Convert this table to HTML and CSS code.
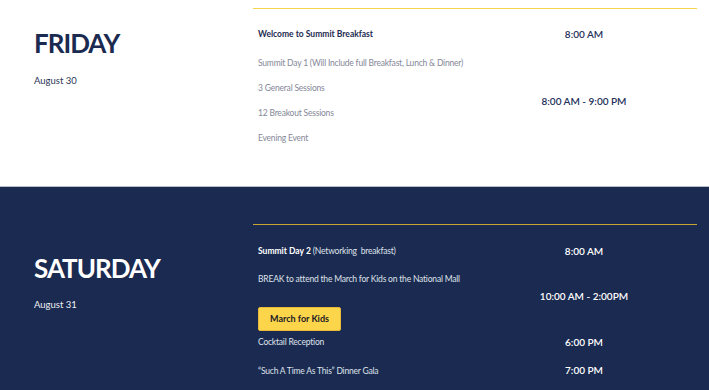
FILE: index.html
```html
<!DOCTYPE html>
<html lang="en">
<head>
<meta charset="utf-8">
<title>Summit Schedule</title>
<link rel="stylesheet" href="styles.css">
</head>
<body>
<section class="day day--light">
  <div class="day-info day-info--friday">
    <h2 class="day-name">FRIDAY</h2>
    <p class="day-date">August 30</p>
  </div>
  <div class="schedule">
    <div class="row row--first">
      <div class="events"><p class="event event--strong">Welcome to Summit Breakfast</p></div>
      <div class="time">8:00 AM</div>
    </div>
    <div class="row row--list">
      <div class="events events--list">
        <p class="event">Summit Day 1 (Will Include full Breakfast, Lunch &amp; Dinner)</p>
        <p class="event">3 General Sessions</p>
        <p class="event">12 Breakout Sessions</p>
        <p class="event">Evening Event</p>
      </div>
      <div class="time">8:00 AM - 9:00 PM</div>
    </div>
  </div>
</section>
<section class="day day--dark">
  <div class="day-info day-info--saturday">
    <h2 class="day-name">SATURDAY</h2>
    <p class="day-date">August 31</p>
  </div>
  <div class="schedule">
    <div class="row row--first">
      <div class="events"><p class="event"><strong class="event-title">Summit Day 2</strong> (Networking&nbsp; breakfast)</p></div>
      <div class="time">8:00 AM</div>
    </div>
    <div class="row">
      <div class="events events--break">
        <p class="event">BREAK to attend the March for Kids on the National Mall</p>
        <a class="btn" href="#">March for Kids</a>
      </div>
      <div class="time time--raised">10:00 AM - 2:00PM</div>
    </div>
    <div class="row row--tight">
      <div class="events"><p class="event">Cocktail Reception</p></div>
      <div class="time">6:00 PM</div>
    </div>
    <div class="row">
      <div class="events"><p class="event">“Such A Time As This” Dinner Gala</p></div>
      <div class="time time--up">7:00 PM</div>
    </div>
  </div>
</section>
</body>
</html>
```

FILE: styles.css
```css
* { box-sizing: border-box; }

html, body {
  margin: 0;
  padding: 0;
  background: #ffffff;
  font-family: Lato, "Open Sans", Arial, sans-serif;
  overflow: hidden;
}

.day {
  display: grid;
  grid-template-columns: 253px 1fr;
  padding: 0 12px 0 0;
}

.day--light {
  background: #ffffff;
  height: 186px;
  padding-top: 8px;
  color: #1b2a50;
}

.day--dark {
  background: #1b2a50;
  border-top: 1px solid #b8bcc8;
  padding-top: 37px;
  height: 204px;
  color: #ffffff;
}

.day-info {
  padding-left: 34px;
}

.day-info--friday { padding-top: 19px; }
.day-info--saturday { padding-top: 28px; }

.day-name {
  margin: 0;
  font-size: 26px;
  line-height: 32px;
  font-weight: 700;
  letter-spacing: -1px;
}

.day--light .day-name { color: #1b2a50; }
.day--dark .day-name { color: #ffffff; }

.day-date {
  margin: 15px 0 0;
  font-size: 9.5px;
  line-height: 14px;
}

.day--dark .day-date { margin-top: 14px; }

.day--light .day-date { color: #2b3555; }
.day--dark .day-date { color: #eef0f5; }

.schedule {
  border-top: 1px solid #f8d64b;
  padding-top: 18px;
}

.day--dark .schedule { border-top-color: #caa431; padding-top: 19px; }

.row {
  display: grid;
  grid-template-columns: 1fr 1fr;
  align-items: center;
  margin-top: 14px;
}

.row--first { margin-top: 0; }
.row--list { margin-top: 15px; }
.row--tight { margin-top: 4px; }

.events {
  padding-left: 5px;
}

.events--list {
  display: flex;
  flex-direction: column;
  gap: 11px;
}

.events--break {
  display: flex;
  flex-direction: column;
  align-items: flex-start;
  gap: 21px;
}

.event {
  margin: 0;
  font-size: 8.5px;
  letter-spacing: -0.2px;
  line-height: 14px;
  white-space: nowrap;
}

.day--light .event { color: #858898; }
.day--light .event--strong { color: #1b2a50; font-weight: 700; letter-spacing: 0; }

.day--dark .event { color: #dfe2ea; }
.event-title { color: #ffffff; font-weight: 700; letter-spacing: 0; }

.time {
  text-align: center;
  padding-right: 4px;
  font-size: 10px;
  line-height: 14px;
  font-weight: 600;
  white-space: nowrap;
}

.day--light .time { color: #24305a; }
.day--dark .time { color: #ffffff; }

.time--raised { margin-bottom: 12px; }
.time--up { margin-bottom: 2px; }

.btn {
  display: inline-block;
  width: 83px;
  height: 24px;
  line-height: 22px;
  text-align: center;
  background: #fdd54b;
  border: 1px solid #e6b93a;
  border-radius: 2px;
  color: #1b1b24;
  font-size: 9px;
  font-weight: 700;
  text-decoration: none;
}
```
